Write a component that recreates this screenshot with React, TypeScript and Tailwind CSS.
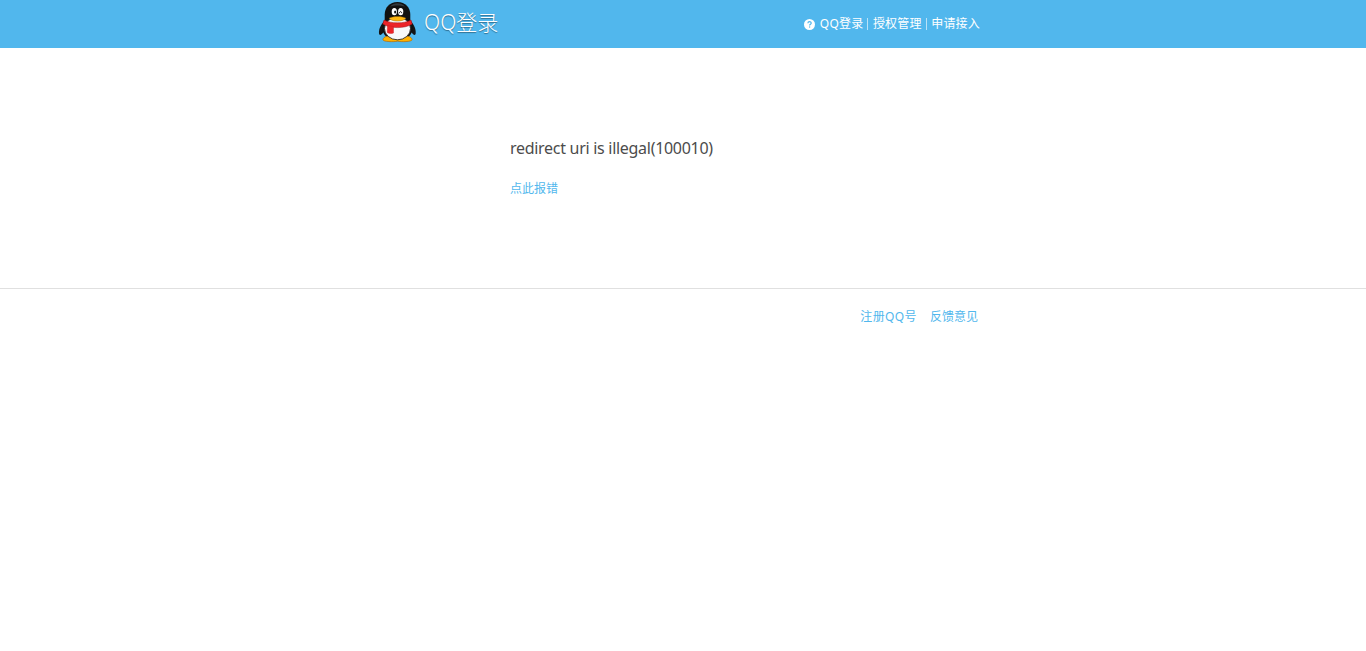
import type { ReactNode } from 'react';

function Penguin() {
  return (
    <svg width="38" height="42" viewBox="0 0 38 42" className="block shrink-0" aria-hidden="true">
      {/* Wings */}
      <path d="M7 19C3 22 .5 27 1 31.5C1.3 34 3.8 33 6 29.5Z" fill="#141414" />
      <path d="M32 19C36 22 38 27 37.7 31.5C37.4 34 35 33 33 29.5Z" fill="#141414" />
      {/* Body and head */}
      <ellipse cx="19.5" cy="25.5" rx="15.5" ry="13" fill="#111" />
      <path d="M19.5 0C11.5 0 6.7 5.6 6.7 12.5V19C7 24 32 24 32.3 19V12.5C32.3 5.6 27.5 0 19.5 0Z" fill="#111" />
      <path d="M12 4.5C14 1.8 17 1.2 19.5 1.2C22 1.2 25 1.8 27 4.5C23 3 16 3 12 4.5Z" fill="#353a3e" />
      {/* Feet */}
      <path d="M5 37.7C5 35.4 8 34 11.5 34H27.5C31 34 34 35.4 34 37.7C34 39.9 23 40 19.5 39.2C16 40 5 39.900 5 37.700Z" fill="#ffb000" stroke="#a76000" strokeWidth="0.6" />
      <ellipse cx="19.5" cy="26.5" rx="13" ry="11.3" fill="#f8f9fa" stroke="#111" strokeWidth="0.8" />
      {/* Scarf */}
      <path d="M6 18C13 21.8 26 21.8 33 18L34.2 22C27 26.8 12 26.8 4.8 22Z" fill="#ec2328" stroke="#96131a" strokeWidth="0.5" />
      <path d="M9.5 23.5L15.5 24.5V31C13 32 11 31.7 9.2 30.5Z" fill="#ec2328" stroke="#c51a20" strokeWidth="0.4" />
      {/* Eyes */}
      <ellipse cx="16.3" cy="9.7" rx="2.6" ry="3.6" fill="#fff" />
      <ellipse cx="22.7" cy="9.7" rx="2.6" ry="3.6" fill="#fff" />
      <ellipse cx="17.1" cy="10.1" rx="1" ry="1.5" fill="#111" />
      <path d="M21.5 10.8C21.7 9 23.5 9 23.7 10.8" fill="none" stroke="#111" strokeWidth="1" strokeLinecap="round" />
      {/* Beak */}
      <path d="M11 16.2C15 13.9 24 13.9 28 16.2C25 20 14 20 11 16.2Z" fill="#ffb812" stroke="#8a5600" strokeWidth="0.4" />
    </svg>
  );
}

function HelpIcon() {
  return (
    <svg width="11" height="11" viewBox="0 0 11 11" className="mr-[5px] mt-px block shrink-0" aria-hidden="true">
      <circle cx="5.5" cy="5.5" r="5.5" fill="#fff" />
      <path d="M3.9 4.3C3.9 2.2 7.2 2.2 7.2 4.2C7.2 5.3 5.6 5.3 5.6 6.6" fill="none" stroke="#51b7ed" strokeWidth="1.2" />
      <rect x="5" y="7.4" width="1.2" height="1.2" fill="#51b7ed" />
    </svg>
  );
}

function NavLink({ children }: { children: ReactNode }) {
  return (
    <a href="#" className="whitespace-nowrap tracking-[0.2px] text-white">
      {children}
    </a>
  );
}

function Divider() {
  return <span className="ml-1 mr-[4.5px] h-3 w-px bg-white/60" />;
}

export default function App() {
  return (
    <div className="min-h-[651px] bg-white font-['Noto_Sans','Noto_Sans_CJK_SC',sans-serif] text-xs text-[#51b7ed]">
      <header className="h-12 bg-[#51b7ed]">
        <div className="mx-auto flex h-12 w-[610px] items-center justify-between pr-2">
          <h1 className="flex h-full items-start pt-0.5">
            <Penguin />
            <span className="ml-2 mt-1 whitespace-nowrap text-[21px] font-light leading-8 text-white [text-shadow:0px_1px_1px_rgba(0,0,0,0.4)]">
              QQ登录
            </span>
          </h1>
          <nav className="flex items-center leading-4">
            <HelpIcon />
            <NavLink>QQ登录</NavLink>
            <Divider />
            <NavLink>授权管理</NavLink>
            <Divider />
            <NavLink>申请接入</NavLink>
          </nav>
        </div>
      </header>

      <main className="h-60 pl-[510px] pt-[88px]">
        <p className="text-base leading-6 tracking-[-0.29px] text-[#4c4c4c]">redirect uri is illegal(100010)</p>
        <a href="#" className="mt-[21px] block w-max leading-4">
          点此报错
        </a>
      </main>

      <footer className="border-t border-[#e0e0e0]">
        <div className="mx-auto flex w-[610px] justify-end gap-[13px] pr-[10px] pt-5 leading-4">
          <a href="#" className="tracking-[0.4px]">
            注册QQ号
          </a>
          <a href="#">反馈意见</a>
        </div>
      </footer>
    </div>
  );
}
